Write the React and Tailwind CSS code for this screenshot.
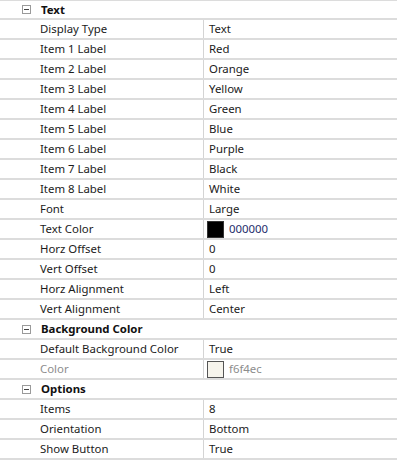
import React from "react";

const font = { fontFamily: '"Segoe UI", "Noto Sans", "Open Sans", sans-serif' };

function Minus() {
  return (
    <span className="w-[9px] h-[9px] border border-[#9a9a9a] flex items-center justify-center bg-white">
      <span className="w-[5px] h-px bg-[#444]" />
    </span>
  );
}

function Header({ title, first }) {
  return (
    <div className={`${first ? "h-[19px]" : "h-[20px]"} flex items-center border-b-2 border-[#dcdcdc]`}>
      <div className="w-[22px]" />
      <Minus />
      <div className="ml-[10px] font-bold text-[11.4px] text-[#111]">{title}</div>
    </div>
  );
}

function Row({ label, value, swatch, disabled }) {
  return (
    <div className="h-[20px] flex items-center border-b-2 border-[#dcdcdc]">
      <div className={`w-[204px] pl-[40px] text-[11.4px] h-full flex items-center border-r border-[#d4d4d4] ${disabled ? "text-[#8d8d8d]" : "text-[#1b1b1b]"}`}>
        {label}
      </div>
      <div className={`flex-1 h-full flex items-center text-[11.4px] ${swatch ? "pl-[3px]" : "pl-[5px]"} ${disabled ? "text-[#8d8d8d]" : "text-[#1b1b1b]"}`}>
        {swatch && (
          <span
            className={`w-[17px] h-[17px] mr-[5px] border ${disabled ? "border-[#555]" : "border-[#333]"}`}
            style={{ backgroundColor: swatch }}
          />
        )}
        <span className={swatch && !disabled ? "text-[#1c2d6b]" : ""}>{value}</span>
      </div>
    </div>
  );
}

export default function App() {
  const rows1 = [
    ["Display Type", "Text"],
    ["Item 1 Label", "Red"],
    ["Item 2 Label", "Orange"],
    ["Item 3 Label", "Yellow"],
    ["Item 4 Label", "Green"],
    ["Item 5 Label", "Blue"],
    ["Item 6 Label", "Purple"],
    ["Item 7 Label", "Black"],
    ["Item 8 Label", "White"],
    ["Font", "Large"],
  ];
  const rows2 = [
    ["Horz Offset", "0"],
    ["Vert Offset", "0"],
    ["Horz Alignment", "Left"],
    ["Vert Alignment", "Center"],
  ];
  return (
    <div className="w-[397px] h-[460px] bg-white overflow-hidden border-t border-[#dcdcdc]" style={font}>
      <Header title="Text" first />
      {rows1.map(([l, v]) => (
        <Row key={l} label={l} value={v} />
      ))}
      <Row label="Text Color" value="000000" swatch="#000000" />
      {rows2.map(([l, v]) => (
        <Row key={l} label={l} value={v} />
      ))}
      <Header title="Background Color" />
      <Row label="Default Background Color" value="True" />
      <Row label="Color" value="f6f4ec" swatch="#f6f4ec" disabled />
      <Header title="Options" />
      <Row label="Items" value="8" />
      <Row label="Orientation" value="Bottom" />
      <Row label="Show Button" value="True" />
    </div>
  );
}
